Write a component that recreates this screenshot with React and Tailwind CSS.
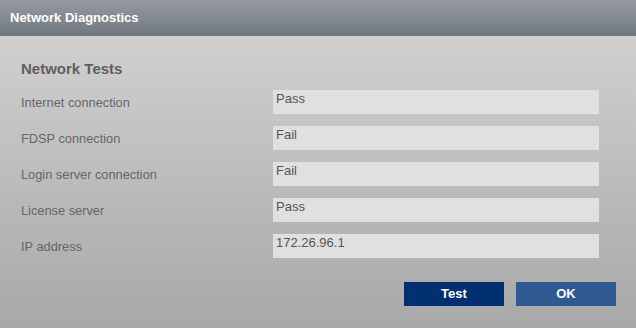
export default function App() {
  const rows = [
    ['Internet connection', 'Pass'],
    ['FDSP connection', 'Fail'],
    ['Login server connection', 'Fail'],
    ['License server', 'Pass'],
    ['IP address', '172.26.96.1'],
  ];

  return (
    <div className="w-[636px] h-[328px] flex flex-col overflow-hidden font-['Liberation_Sans',Arial,sans-serif]">
      <div className="h-[36px] shrink-0 flex items-center px-[10px] bg-gradient-to-b from-[#979aa3] to-[#6f787e]">
        <span className="text-white font-bold text-[13px]">Network Diagnostics</span>
      </div>
      <div className="flex-1 flex flex-col bg-gradient-to-b from-[#d0d0d0] to-[#a8a8a8] pt-[23px] pl-[21px] pr-[20px]">
        <h2 className="text-[15px] leading-[20px] font-bold text-[#5f5f5f]">Network Tests</h2>
        <div className="mt-[11px] flex flex-col gap-[12px]">
          {rows.map(([label, value]) => (
            <div key={label} className="flex items-center">
              <div className="w-[252px] pt-[1px] text-[12.8px] text-[#666]">{label}</div>
              <div className="w-[326px] h-[24px] bg-[#e0e0e0] px-[3px] pt-[1px] text-[13px] leading-[16px] text-[#555]">
                {value}
              </div>
            </div>
          ))}
        </div>
        <div className="mt-[24px] flex justify-end gap-[12px]">
          <button className="w-[100px] h-[24px] bg-[#00306f] text-white font-bold text-[13px]">Test</button>
          <button className="w-[100px] h-[24px] bg-[#2f5a91] text-white font-bold text-[13px]">OK</button>
        </div>
      </div>
    </div>
  );
}
